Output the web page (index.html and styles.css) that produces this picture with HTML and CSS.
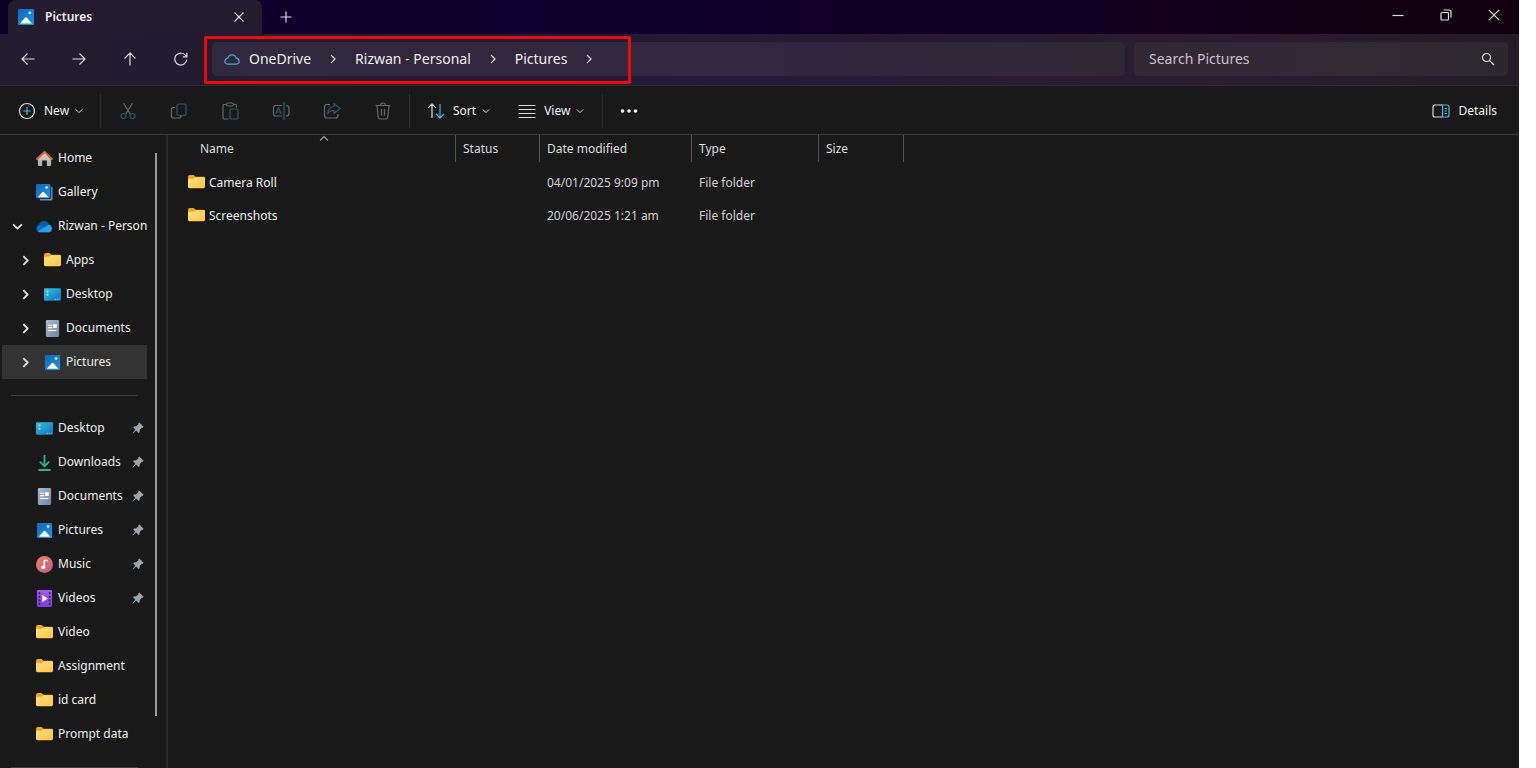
FILE: index.html
```
<!DOCTYPE html>
<html lang="en">

<head>
    <meta charset="utf-8">
    <title>Pictures</title>
    <meta name="viewport" content="width=device-width">
    <link rel="stylesheet" href="styles.css">
</head>

<body>
    <svg class="defs" width="0" height="0" aria-hidden="true">
        <defs>
            <linearGradient id="g-blue" x1="0" y1="0" x2="1" y2="1">
                <stop offset="0" stop-color="#1268b8" />
                <stop offset="1" stop-color="#1d95e2" />
            </linearGradient>
            <linearGradient id="g-folder" x1="0" y1="0" x2="1" y2="1">
                <stop offset="0" stop-color="#ffe08a" />
                <stop offset="1" stop-color="#fcc63f" />
            </linearGradient>
            <linearGradient id="g-desk" x1="0" y1="0" x2="1" y2="1">
                <stop offset="0" stop-color="#35c5dc" />
                <stop offset="1" stop-color="#0c72bd" />
            </linearGradient>
            <linearGradient id="g-doc" x1="0" y1="0" x2="1" y2="1">
                <stop offset="0" stop-color="#aebdd0" />
                <stop offset="1" stop-color="#71859f" />
            </linearGradient>
            <linearGradient id="g-music" x1="0" y1="0" x2="1" y2="1">
                <stop offset="0" stop-color="#ef8458" />
                <stop offset="1" stop-color="#bb5c8c" />
            </linearGradient>
            <linearGradient id="g-video" x1="0" y1="0" x2="0" y2="1">
                <stop offset="0" stop-color="#a95ce8" />
                <stop offset="1" stop-color="#7a3fd8" />
            </linearGradient>
            <linearGradient id="g-wall" x1="0" y1="0" x2="0" y2="1">
                <stop offset="0" stop-color="#e0ddda" />
                <stop offset="1" stop-color="#a8a6a4" />
            </linearGradient>
        </defs>
        <symbol id="pictures" viewBox="0 0 18 18">
            <rect x="1" y="1" width="16" height="16" rx="1" fill="url(#g-blue)" />
            <path d="M3 15.500 8 9.700q1-1 2 0L15 15.500z" fill="#fff" />
            <circle cx="12.800" cy="4.800" r="1.400" fill="#d5f0ff" />
        </symbol>
        <symbol id="gallery" viewBox="0 0 18 18">
            <path d="M4 3h12.500q1 0 1 1v12.500q0 1-1 1H5q-1 0-1-1z" fill="#5e94bd" />
            <rect x="0" y="0" width="16" height="16" rx="1.500" fill="#1a1a1a" />
            <rect x="0" y="0" width="15.200" height="15.200" rx="1.500" fill="url(#g-blue)" />
            <path d="M2 14 6.600 8.700q1-1 2 0L13.200 14z" fill="#fff" />
            <circle cx="11.300" cy="3.800" r="1.300" fill="#d5f0ff" />
        </symbol>
        <symbol id="home" viewBox="0 0 18 18">
            <path d="M2 8 9 2l7 6v8q0 1-1 1h-3.500v-6h-5v6H3q-1 0-1-1z" fill="url(#g-wall)" />
            <path d="M1.200 9.500 9 2.200l7.800 7.300" fill="none" stroke="#d8682a" stroke-width="2.200" stroke-linecap="round" stroke-linejoin="round" />
        </symbol>
        <symbol id="onedrive" viewBox="0 0 18 18">
            <path d="M4 15a4 4 0 0 1-.6-7.800A5.600 5.600 0 0 1 13.600 7 4.100 4.100 0 0 1 14 15z" fill="#0d6cc4" />
            <path d="M5.500 4.300Q8 2.700 10.600 3.600q2.300.8 3.200 3.500L8.600 9.500 3.200 7.200q.4-1.900 2.300-2.900z" fill="#0a5cac" />
            <path d="M2.200 13.900 13.600 7.200A4.100 4.100 0 0 1 14 15H4q-1 0-1.800-1.100z" fill="#2ba0ea" />
        </symbol>
        <symbol id="folder" viewBox="0 0 18 18">
            <path d="M0 3q0-2 2-2h4l2 2h8.500q1.500 0 1.500 1.500V8H0z" fill="#eda712" />
            <path d="M0 6.500Q0 5 1.500 5H6l2-1.500h8.500Q18 3.500 18 5v8.500q0 1.500-1.500 1.500h-15Q0 15 0 13.500z" fill="url(#g-folder)" />
        </symbol>
        <symbol id="desktop" viewBox="0 0 18 18">
            <rect x="0" y="2.500" width="18" height="13" rx="1" fill="url(#g-desk)" />
            <path d="M3 5h1.500v1.500H3zM3 8.500h1.500V10H3z" fill="#fff" />
            <path d="M11.500 13.500h1v1h-1zM13.500 13.500h1v1h-1zM15.500 13.500h1v1h-1z" fill="#a7dcf7" />
        </symbol>
        <symbol id="documents" viewBox="0 0 18 18">
            <rect x="2" y="0" width="14" height="18" rx="1.200" fill="url(#g-doc)" />
            <path d="M4.500 5h4v1.200h-4zM4.500 7.500h4v1.200h-4zM4.500 10.500h8.500v1.200H4.500z" fill="#fff" />
            <rect x="9.500" y="4.500" width="4" height="4" fill="#fff" />
        </symbol>
        <symbol id="downloads" viewBox="0 0 18 18">
            <path d="M9 1v11.500M4 8l5 5 5-5M2.500 17h13" fill="none" stroke="#25b48c" stroke-width="2" />
        </symbol>
        <symbol id="music" viewBox="0 0 18 18">
            <circle cx="9" cy="9" r="9" fill="url(#g-music)" />
            <path d="M8.800 4v8M8.800 4.800h3.400" fill="none" stroke="#fff" stroke-width="1.700" />
            <circle cx="7.700" cy="12" r="2" fill="#fff" />
        </symbol>
        <symbol id="videos" viewBox="0 0 18 18">
            <rect x="1" y="0" width="16" height="18" rx="1.500" fill="url(#g-video)" />
            <path d="M2.500 2.500h2v2h-2zM2.500 6.200h2v2h-2zM2.500 9.900h2v2h-2zM2.500 13.600h2v2h-2zM13.500 2.500h2v2h-2zM13.500 6.200h2v2h-2zM13.500 9.900h2v2h-2zM13.500 13.600h2v2h-2z" fill="#3d1a86" />
            <path d="M6.700 5.200v7.600L12.600 9z" fill="#fff" />
        </symbol>
        <symbol id="pin" viewBox="0 0 12 12">
            <path d="M7.300.600 11.600 4.800 10.600 5.900 9.900 5.700 7.800 8.100 7.500 10.300 6.600 11 4.100 8.600 1 11.500.500 11.100 3.300 7.800 1.200 5.500 2 4.600 4.200 4.300 6.500 2.200 6.300 1.500z" fill="#9aa5ad" />
        </symbol>
        <symbol id="chevron" viewBox="0 0 10 10">
            <path d="M3 1l4 4-4 4" />
        </symbol>
        <symbol id="chevron-down" viewBox="0 0 10 10">
            <path d="M1 3l4 4 4-4" />
        </symbol>
    </svg>

    <div class="window">
        <header class="titlebar">
            <div class="tab">
                <svg class="icon16"><use href="#pictures" /></svg>
                <span class="tab-title">Pictures</span>
                <button class="plain" aria-label="Close tab">
                    <svg class="line" width="12" height="12" viewBox="0 0 12 12"><path d="M1.500 1.500l9 9M10.500 1.500l-9 9" /></svg>
                </button>
            </div>
            <button class="plain new-tab" aria-label="New tab">
                <svg class="line" width="12" height="12" viewBox="0 0 12 12"><path d="M6 .500v11M.500 6h11" /></svg>
            </button>
            <div class="window-buttons">
                <button class="plain" aria-label="Minimize">
                    <svg class="line" width="12" height="12" viewBox="0 0 12 12"><path d="M.500 6.500h11" /></svg>
                </button>
                <button class="plain" aria-label="Restore">
                    <svg class="line" width="12" height="12" viewBox="0 0 12 12"><rect x="1" y="3.500" width="7.500" height="7.500" rx="1" /><path d="M3.500 1h5.500q2 0 2 2v5.500" /></svg>
                </button>
                <button class="plain" aria-label="Close">
                    <svg class="line" width="12" height="12" viewBox="0 0 12 12"><path d="M.800.800l10.400 10.400M11.200.800L.800 11.200" /></svg>
                </button>
            </div>
        </header>

        <div class="navbar">
            <button class="plain nav-button" aria-label="Back">
                <svg class="line" width="14" height="14" viewBox="0 0 14 14"><path d="M13.500 7H1M6.500 1.500L1 7l5.500 5.500" /></svg>
            </button>
            <button class="plain nav-button" aria-label="Forward">
                <svg class="line" width="14" height="14" viewBox="0 0 14 14"><path d="M.500 7H13M7.500 1.500L13 7l-5.500 5.500" /></svg>
            </button>
            <button class="plain nav-button" aria-label="Up">
                <svg class="line" width="14" height="14" viewBox="0 0 14 14"><path d="M7 13.500V1M1.500 6.500L7 1l5.500 5.500" /></svg>
            </button>
            <button class="plain nav-button" aria-label="Refresh">
                <svg class="line" width="14" height="14" viewBox="0 0 14 14"><path d="M12.800 7.500A6 6 0 1 1 11.600 3.400L12.800 4.800M12.900.800v4.100H8.800" /></svg>
            </button>
            <nav class="address" aria-label="Address">
                <svg class="cloud" width="16" height="12" viewBox="0 0 16 12"><path d="M4 11.200a3 3 0 0 1-.2-6A4.300 4.300 0 0 1 12.200 5.200 3 3 0 0 1 12 11.200z" /></svg>
                <a href="#">OneDrive</a>
                <svg class="line sep"><use href="#chevron" /></svg>
                <a href="#">Rizwan - Personal</a>
                <svg class="line sep"><use href="#chevron" /></svg>
                <a href="#">Pictures</a>
                <svg class="line sep"><use href="#chevron" /></svg>
                <div class="highlight"></div>
            </nav>
            <div class="search">
                <input type="search" placeholder="Search Pictures" aria-label="Search Pictures">
                <svg class="line" width="14" height="14" viewBox="0 0 14 14"><circle cx="5.500" cy="5.500" r="4" /><path d="M8.500 8.500l4.500 4.500" /></svg>
            </div>
        </div>

        <div class="toolbar">
            <button class="plain tool new">
                <svg class="line" width="18" height="18" viewBox="0 0 18 18"><circle cx="9" cy="9" r="7.500" /><path class="accent" d="M9 5.300v7.400M5.300 9h7.400" /></svg>
                New
                <svg class="line small"><use href="#chevron-down" /></svg>
            </button>
            <div class="divider"></div>
            <button class="plain action" aria-label="Cut" disabled>
                <svg class="line" width="18" height="18" viewBox="0 0 18 18"><path d="M4.500 1l6.700 11M13.500 1L6.800 12" /><g class="accent"><circle cx="4.500" cy="14" r="2.500" /><circle cx="13.500" cy="14" r="2.500" /></g></svg>
            </button>
            <button class="plain action" aria-label="Copy" disabled>
                <svg class="line" width="18" height="18" viewBox="0 0 18 18"><path d="M5 5.500H3.500q-2 0-2 2v6.500q0 2 2 2h5.500q2 0 2-2" /><rect class="accent" x="7" y="2" width="9" height="11.500" rx="2" /></svg>
            </button>
            <button class="plain action" aria-label="Paste" disabled>
                <svg class="line" width="18" height="18" viewBox="0 0 18 18"><path d="M6 2.500H3q-1 0-1 1V16q0 1 1 1h4.500M12 2.500h2.500q1 0 1 1V5.500" /><rect x="5.500" y="1" width="7" height="3" rx="1.500" /><rect class="accent" x="9" y="7" width="8" height="10" rx="1" /></svg>
            </button>
            <button class="plain action" aria-label="Rename" disabled>
                <svg class="line" width="18" height="18" viewBox="0 0 18 18"><path d="M10 3.500H3.500q-2 0-2 2v6.500q0 2 2 2H10M14 3.500q3 0 3 2.500v5.500q0 2.500-3 2.500" /><path class="accent" d="M10.500 1h3M12 1v16M10.500 17h3M3.800 12l2.700-6.500L9.200 12M4.600 10h3.800" /></svg>
            </button>
            <button class="plain action" aria-label="Share" disabled>
                <svg class="line" width="18" height="18" viewBox="0 0 18 18"><path d="M7 2.500H4q-2.500 0-2.500 2.500v8.500Q1.500 16 4 16h8.500q2.500 0 2.500-2.500V12" /><path class="accent" d="M11 1.500L17 6.500l-6 5V8.500Q7 8.500 4.500 11.500 5.500 5 11 4.500z" /></svg>
            </button>
            <button class="plain action" aria-label="Delete" disabled>
                <svg class="line" width="18" height="18" viewBox="0 0 18 18"><path d="M1.500 3.500h15M6.500 3.500q0-2.500 2.500-2.500t2.500 2.500M3 3.500l1.200 11.500q.2 2 2 2h5.600q1.800 0 2-2L15 3.500M7.500 7v6.500M10.500 7v6.500" /></svg>
            </button>
            <div class="divider"></div>
            <button class="plain tool sort">
                <svg class="line" width="18" height="18" viewBox="0 0 18 18"><path d="M5 16V2M1 6l4-4 4 4" /><path class="accent" d="M13 2v14M9 12l4 4 4-4" /></svg>
                Sort
                <svg class="line small"><use href="#chevron-down" /></svg>
            </button>
            <button class="plain tool view">
                <svg class="line" width="18" height="18" viewBox="0 0 18 18"><path d="M.500 3.500h17M.500 7.500h17M.500 11.500h17M.500 15.500h17" /></svg>
                View
                <svg class="line small"><use href="#chevron-down" /></svg>
            </button>
            <div class="divider"></div>
            <button class="plain more" aria-label="See more">
                <svg width="18" height="6" viewBox="0 0 18 6" fill="#fff"><circle cx="2.500" cy="3" r="1.800" /><circle cx="9" cy="3" r="1.800" /><circle cx="15.500" cy="3" r="1.800" /></svg>
            </button>
            <button class="plain tool details">
                <svg class="line" width="18" height="18" viewBox="0 0 18 18"><path d="M10.500 3H3q-2 0-2 2v8q0 2 2 2h7.500" /><path class="accent" d="M10.500 3H15q2 0 2 2v8q0 2-2 2h-4.500zM12.500 6.500h2.500M12.500 9h2.500M12.500 11.500h2.500" /></svg>
                Details
            </button>
        </div>

        <div class="content">
            <aside class="sidebar">
                <nav class="tree" aria-label="Folders">
                    <a href="#"><svg><use href="#home" /></svg>Home</a>
                    <a href="#"><svg><use href="#gallery" /></svg>Gallery</a>
                    <a href="#" class="open"><svg class="line arrow"><use href="#chevron-down" /></svg><svg><use href="#onedrive" /></svg>Rizwan - Person</a>
                    <a href="#" class="child"><svg class="line arrow"><use href="#chevron" /></svg><svg><use href="#folder" /></svg>Apps</a>
                    <a href="#" class="child"><svg class="line arrow"><use href="#chevron" /></svg><svg><use href="#desktop" /></svg>Desktop</a>
                    <a href="#" class="child"><svg class="line arrow"><use href="#chevron" /></svg><svg><use href="#documents" /></svg>Documents</a>
                    <a href="#" class="child selected"><svg class="line arrow"><use href="#chevron" /></svg><svg><use href="#pictures" /></svg>Pictures</a>
                    <hr>
                    <a href="#"><svg><use href="#desktop" /></svg>Desktop<svg class="pin"><use href="#pin" /></svg></a>
                    <a href="#"><svg><use href="#downloads" /></svg>Downloads<svg class="pin"><use href="#pin" /></svg></a>
                    <a href="#"><svg><use href="#documents" /></svg>Documents<svg class="pin"><use href="#pin" /></svg></a>
                    <a href="#"><svg><use href="#pictures" /></svg>Pictures<svg class="pin"><use href="#pin" /></svg></a>
                    <a href="#"><svg><use href="#music" /></svg>Music<svg class="pin"><use href="#pin" /></svg></a>
                    <a href="#"><svg><use href="#videos" /></svg>Videos<svg class="pin"><use href="#pin" /></svg></a>
                    <a href="#"><svg><use href="#folder" /></svg>Video</a>
                    <a href="#"><svg><use href="#folder" /></svg>Assignment</a>
                    <a href="#"><svg><use href="#folder" /></svg>id card</a>
                    <a href="#"><svg><use href="#folder" /></svg>Prompt data</a>
                    <hr>
                </nav>
                <div class="scrollbar"></div>
            </aside>

            <main class="files">
                <table>
                    <colgroup>
                        <col class="col-name">
                        <col class="col-status">
                        <col class="col-date">
                        <col class="col-type">
                        <col class="col-size">
                    </colgroup>
                    <thead>
                        <tr>
                            <th>Name<svg class="line sorted" width="10" height="6" viewBox="0 0 10 6"><path d="M1 5.500l4-4 4 4" /></svg></th>
                            <th>Status</th>
                            <th>Date modified</th>
                            <th>Type</th>
                            <th>Size</th>
                        </tr>
                    </thead>
                    <tbody>
                        <tr>
                            <td><a href="#"><svg><use href="#folder" /></svg>Camera Roll</a></td>
                            <td></td>
                            <td>04/01/2025 9:09 pm</td>
                            <td>File folder</td>
                            <td></td>
                        </tr>
                        <tr>
                            <td><a href="#"><svg><use href="#folder" /></svg>Screenshots</a></td>
                            <td></td>
                            <td>20/06/2025 1:21 am</td>
                            <td>File folder</td>
                            <td></td>
                        </tr>
                    </tbody>
                </table>
            </main>
        </div>
    </div>
</body>

</html>
```
FILE: styles.css
```
* {
    box-sizing: border-box;
}

body {
    margin: 0;
    padding-right: 17px;
    background-color: white;
    color: #f0f0f0;
    font-family: "Noto Sans", "Open Sans", sans-serif;
    font-size: 12px;
    line-height: 16px;
}

a {
    color: inherit;
    text-decoration: none;
}

svg {
    display: block;
    flex: none;
}

.defs {
    position: absolute;
}

.window {
    display: flex;
    flex-direction: column;
    height: 100vh;
    overflow: hidden;
    background-color: #191919;
}

.plain {
    display: flex;
    align-items: center;
    justify-content: center;
    padding: 0;
    border: 0;
    background: none;
    color: inherit;
    font: inherit;
}

.line {
    fill: none;
    stroke: #dcdce0;
    stroke-width: 1.2;
    stroke-linejoin: round;
}

.accent {
    stroke: #4cb4e8;
}

.icon16 {
    width: 18px;
    height: 18px;
}

/* title bar */

.titlebar {
    display: flex;
    flex: none;
    height: 34px;
    background: linear-gradient(to right, #0d0026, #0e0030 35%, #150024 70%, #100010 90%);
}

.tab {
    display: flex;
    align-items: center;
    width: 254px;
    margin-left: 8px;
    padding: 0 17px 0 9px;
    border-radius: 8px 8px 0 0;
    background-color: #221c2e;
}

.tab-title {
    flex: 1;
    margin-left: 10px;
    font-weight: 600;
}

.new-tab {
    width: 47px;
}

.window-buttons {
    display: flex;
    margin-left: auto;
    padding: 0 1px 4px 0;
}

.window-buttons button {
    width: 48px;
}

/* navigation */

.navbar {
    display: flex;
    flex: none;
    align-items: center;
    height: 52px;
    padding: 0 11px 2px 2px;
    border-bottom: 1px solid #302d34;
    background: linear-gradient(to right, #221c2e, #231a36 45%, #2b1c30 80%, #231c26);
}

.nav-button {
    width: 51px;
    height: 34px;
}

.address {
    position: relative;
    display: flex;
    flex: 901;
    align-items: center;
    height: 34px;
    margin-left: 6px;
    padding-left: 12px;
    border-radius: 5px;
    background: linear-gradient(to right, #30283d, #31273e 60%, #302734);
    font-size: 14px;
}

.address a {
    white-space: nowrap;
}

.cloud {
    margin-right: 9px;
    fill: none;
    stroke: #4aa5cf;
    stroke-width: 1.3;
}

.sep {
    width: 10px;
    height: 10px;
    margin: 0 17px;
}

.highlight {
    position: absolute;
    top: -6px;
    left: -8px;
    width: 427px;
    height: 48px;
    border: 3px solid #ec0a0d;
    border-radius: 2px;
}

.search {
    display: flex;
    flex: 346;
    align-items: center;
    height: 34px;
    margin-left: 9px;
    padding: 0 13px 0 15px;
    border-radius: 5px;
    background: linear-gradient(to right, #322735, #322935 60%, #2c272d);
}

.search input {
    flex: 1;
    min-width: 0;
    padding: 0;
    border: 0;
    outline: 0;
    background: none;
    color: #f0f0f0;
    font: inherit;
    font-size: 14px;
}

.search input::placeholder {
    color: #c8c3ca;
}

/* toolbar */

.toolbar {
    display: flex;
    flex: none;
    align-items: center;
    height: 49px;
    padding: 2px 22px 0 18px;
    border-bottom: 1px solid #3a3a3a;
}

.tool {
    gap: 8px;
    height: 34px;
}

.small {
    width: 8px;
    height: 8px;
    margin-left: -2px;
}

.new {
    justify-content: flex-start;
    width: 66px;
    margin-right: 15px;
}

.divider {
    width: 1px;
    height: 34px;
    margin: 0 1px;
    background-color: #303030;
}

.action {
    width: 51px;
    height: 34px;
    opacity: 0.4;
}

.sort {
    margin-left: 16px;
}

.view {
    margin: 0 17px 0 28px;
}

.more {
    width: 50px;
    height: 34px;
}

.details {
    margin-left: auto;
}

/* body */

.content {
    display: flex;
    flex: 1;
    min-height: 0;
}

.sidebar {
    display: flex;
    flex: none;
    width: 168px;
    border-right: 2px solid #2b2b2b;
}

.tree {
    width: 147px;
    padding-top: 6px;
}

.tree a {
    display: flex;
    align-items: center;
    height: 34px;
    margin-left: 2px;
    padding-left: 34px;
    white-space: nowrap;
}

.tree svg {
    width: 17px;
    height: 17px;
    margin-right: 5px;
}

.tree .open {
    padding-left: 10px;
}

.tree .child {
    padding-left: 18px;
}

.tree .arrow {
    width: 11px;
    height: 11px;
    margin-right: 13px;
    stroke-width: 1.7;
}

.tree .pin {
    width: 12px;
    height: 12px;
    margin-left: auto;
    margin-right: 3px;
}

.selected {
    background-color: #333333;
}

hr {
    height: 1px;
    margin: 16px 9px 15px 11px;
    border: 0;
    background-color: #3d3d3d;
}

.scrollbar {
    width: 2px;
    height: 89%;
    margin: 18px 0 0 8px;
    background-color: #9a9a9a;
}

.files {
    flex: 1;
    min-width: 0;
}

table {
    width: 736px;
    table-layout: fixed;
    border-collapse: separate;
    border-spacing: 0;
}

.col-name {
    width: 288px;
}

.col-status {
    width: 84px;
}

.col-date {
    width: 152px;
}

.col-type {
    width: 127px;
}

th {
    position: relative;
    height: 27px;
    padding: 0 7px;
    border-right: 1px solid #555555;
    color: #dedede;
    font-weight: 400;
    text-align: left;
}

th:first-child {
    padding-left: 32px;
}

.sorted {
    position: absolute;
    top: 0;
    right: 126px;
    stroke: #999999;
}

/* gap under the column headings */
tbody::before {
    content: "";
    display: block;
    height: 4px;
}

td {
    height: 33px;
    padding: 0 7px;
    color: #d0d0d0;
    white-space: nowrap;
}

td:first-child {
    padding-left: 20px;
    color: #f0f0f0;
}

td a {
    display: flex;
    align-items: center;
}

td svg {
    width: 17px;
    height: 17px;
    margin-right: 4px;
}
```
